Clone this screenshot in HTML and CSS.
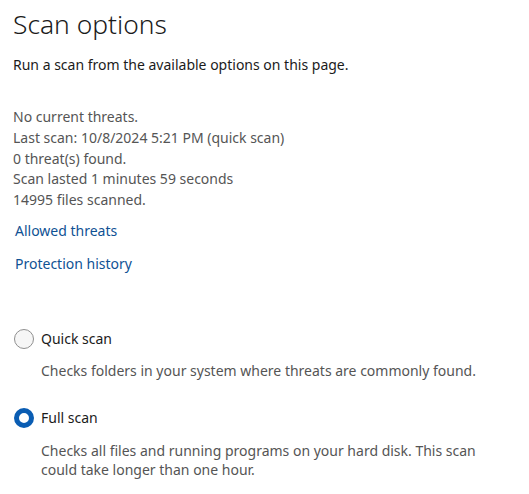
FILE: index.html
```html
<!DOCTYPE html>
<html lang="en">
<head>
<meta charset="utf-8">
<title>Scan options</title>
<link rel="stylesheet" href="styles.css">
</head>
<body>
<main class="page">
  <h1 class="title">Scan options</h1>
  <p class="subtitle">Run a scan from the available options on this page.</p>

  <div class="status">
    <p>No current threats.</p>
    <p>Last scan: 10/8/2024 5:21 PM (quick scan)</p>
    <p>0 threat(s) found.</p>
    <p>Scan lasted 1 minutes 59 seconds</p>
    <p>14995 files scanned.</p>
  </div>

  <nav class="links">
    <a href="#" class="link">Allowed threats</a>
    <a href="#" class="link">Protection history</a>
  </nav>

  <div class="options">
    <div class="option">
      <label class="radio-row"><span class="radio"></span><span class="radio-label">Quick scan</span></label>
      <p class="desc">Checks folders in your system where threats are commonly found.</p>
    </div>
    <div class="option">
      <label class="radio-row"><span class="radio checked"></span><span class="radio-label">Full scan</span></label>
      <p class="desc">Checks all files and running programs on your hard disk. This scan could take longer than one hour.</p>
    </div>
  </div>
</main>
</body>
</html>
```
FILE: styles.css
```css
* { box-sizing: border-box; }
html, body { margin: 0; padding: 0; background: #ffffff; }
body {
  font-family: "Noto Sans", "Open Sans", sans-serif;
  font-size: 14px;
  color: #1b1b1b;
}
p { margin: 0; }
.page {
  padding: 6px 0 0 13px;
  width: 492px;
}
.title {
  margin: 0;
  font-size: 26.4px;
  font-weight: 300;
  line-height: 36px;
  color: #1b1b1b;
}
.subtitle {
  margin-top: 13px;
  line-height: 20px;
  color: #1b1b1b;
}
.status {
  margin-top: 32px;
  color: #555555;
}
.status p { line-height: 20.75px; }
.links {
  display: flex;
  flex-direction: column;
  align-items: flex-start;
  gap: 13px;
  margin-top: 10px;
  padding-left: 2px;
}
.link {
  color: #0f5294;
  text-decoration: none;
  line-height: 20px;
}
.options {
  margin-top: 55px;
  display: flex;
  flex-direction: column;
  gap: 28px;
}
.radio-row {
  display: flex;
  align-items: center;
  gap: 7px;
  line-height: 20px;
  color: #1b1b1b;
}
.radio {
  width: 20px;
  height: 20px;
  border-radius: 50%;
  border: 1px solid #8f8f8f;
  background: #f6f6f6;
  margin-left: 1px;
  flex: none;
}
.radio.checked {
  border: 5px solid #0a5db3;
  background: #ffffff;
}
.desc {
  margin-top: 12px;
  padding-left: 28px;
  line-height: 19px;
  color: #555555;
}
.option:last-child .desc { margin-top: 13.5px; }
```
